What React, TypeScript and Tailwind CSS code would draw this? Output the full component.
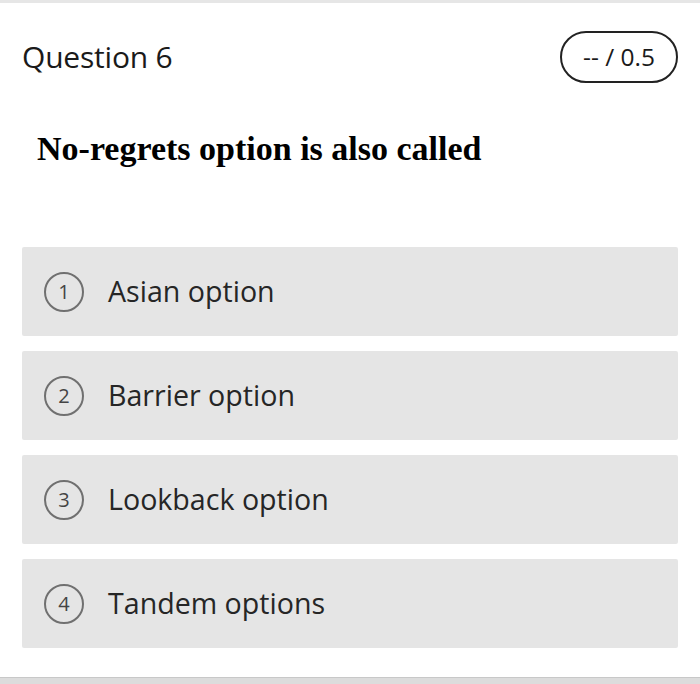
export default function App() {
  const opts = ["Asian option", "Barrier option", "Lookback option", "Tandem options"];
  return (
    <div className="w-[700px] h-[684px] bg-white flex flex-col overflow-hidden" style={{ fontFamily: '"Open Sans", sans-serif' }}>
      <div className="h-[3px] bg-[#e6e6e6]" />
      <div className="flex-1 flex flex-col px-[22px]">
        <div className="flex items-center justify-between mt-[28px] h-[52px]">
          <div className="text-[30px] text-[#1a1a1a] leading-none tracking-[-0.2px]">Question 6</div>
          <div className="h-[52px] w-[118px] rounded-full border-2 border-[#222] flex items-center justify-center text-[24.5px] text-[#1a1a1a] leading-none">-- / 0.5</div>
        </div>
        <div className="mt-[49px] ml-[15px] text-[34px] font-bold text-black leading-none" style={{ fontFamily: '"Liberation Serif", serif' }}>
          No-regrets option is also called
        </div>
        <div className="mt-[81px] flex flex-col gap-[15px]">
          {opts.map((o, i) => (
            <div key={o} className="h-[89px] bg-[#e5e5e5] rounded-[2px] flex items-center pl-[22px]">
              <div className="w-[40px] h-[40px] rounded-full border-2 border-[#707070] flex items-center justify-center text-[20px] text-[#444] leading-none">{i + 1}</div>
              <div className="ml-[24px] text-[28.6px] text-[#262626] leading-none">{o}</div>
            </div>
          ))}
        </div>
      </div>
      <div className="h-[7px] bg-[#dcdcdc] border-t border-[#c8c8c8]" />
    </div>
  );
}
